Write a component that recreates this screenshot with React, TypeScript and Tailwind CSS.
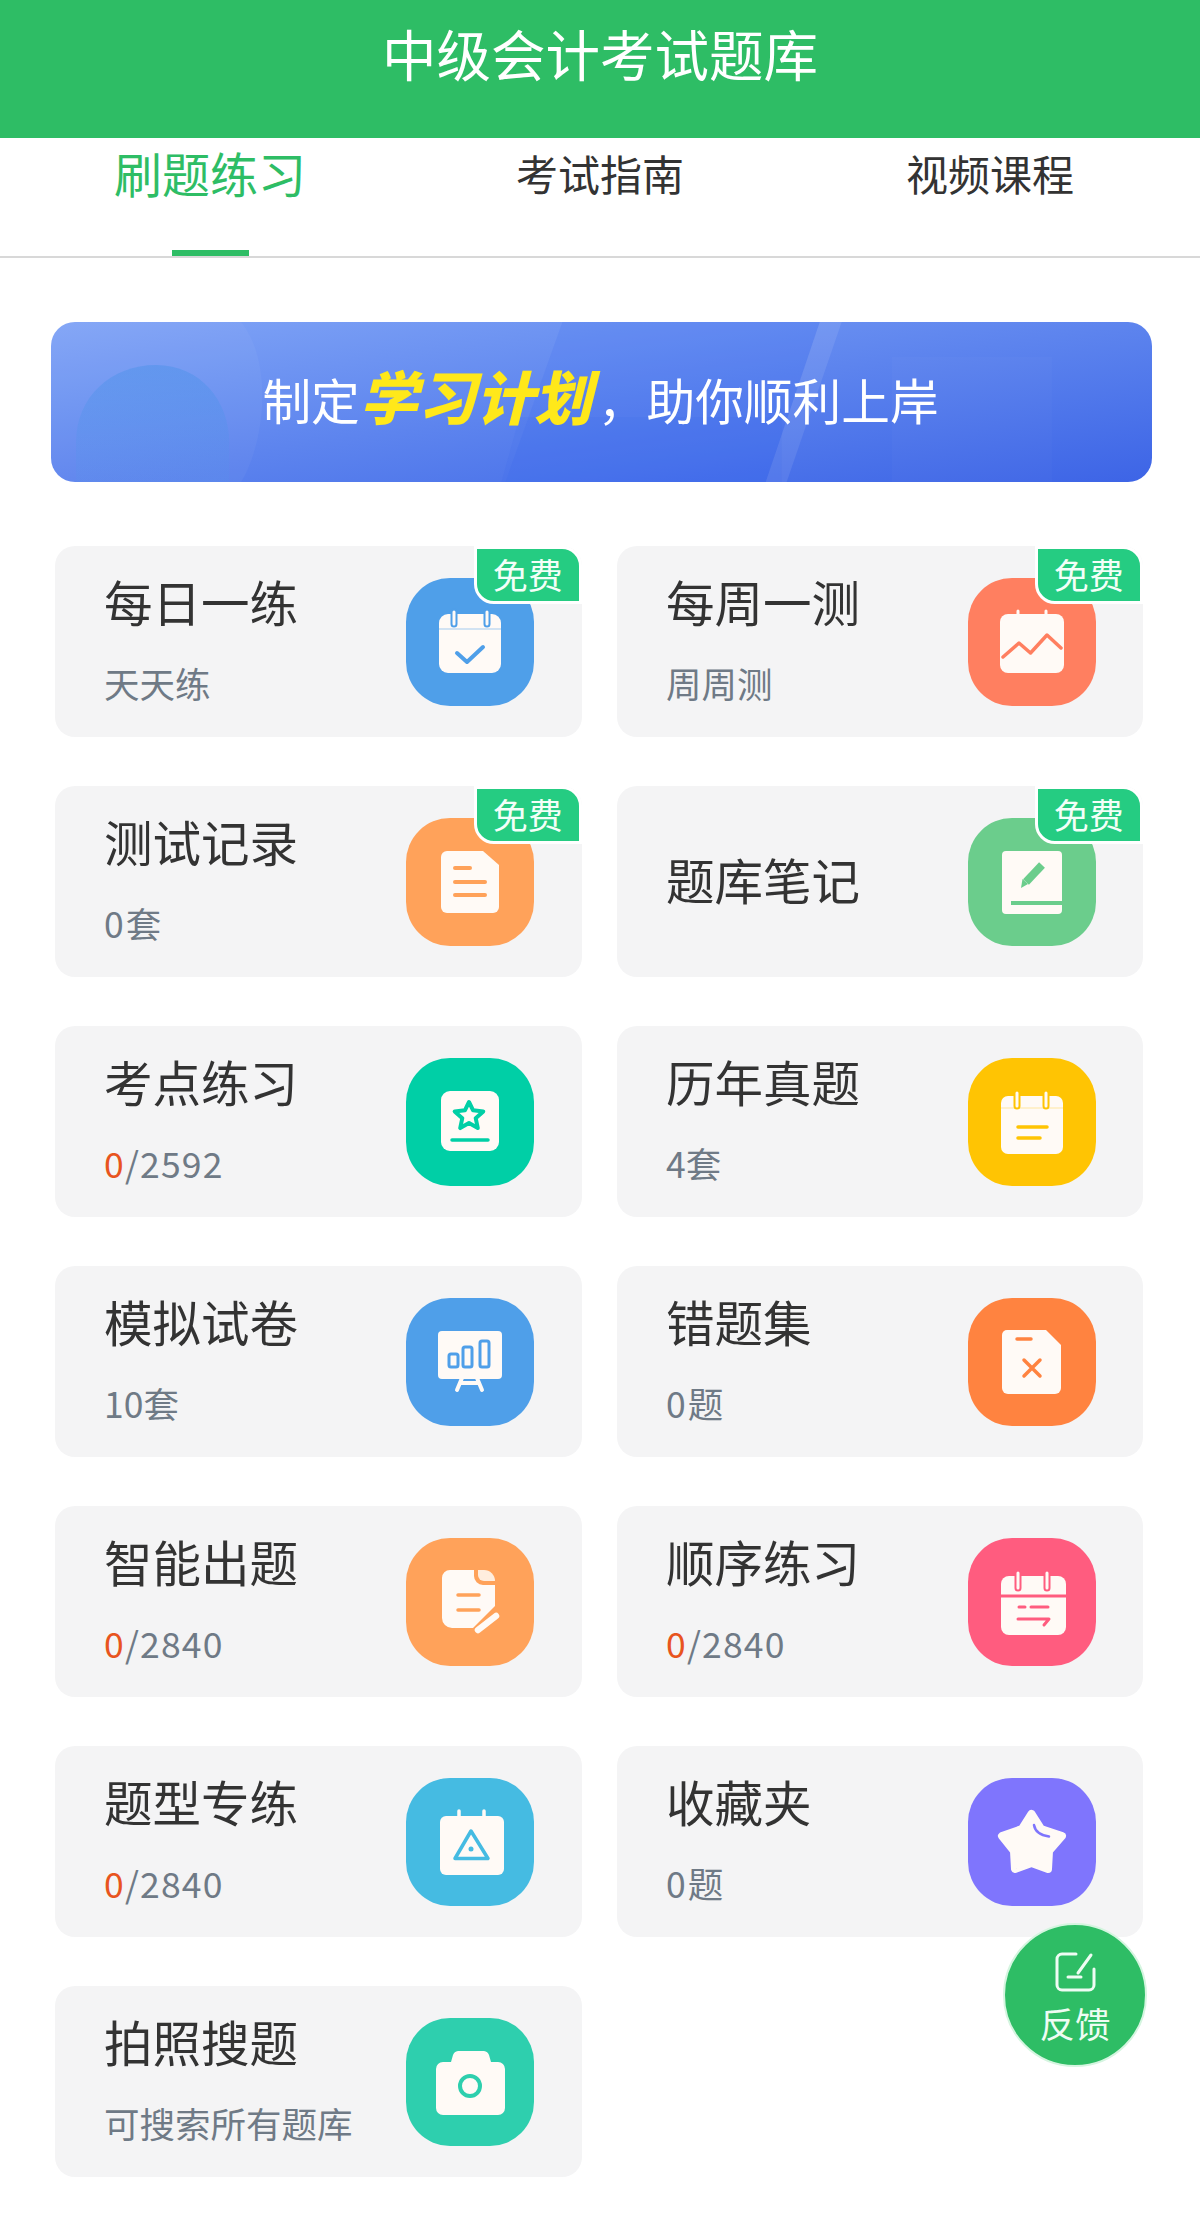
import type { ReactNode } from 'react';

const INK = '#fffaf6';

type Item = {
  title: string;
  sub?: ReactNode;
  tile: string;
  free?: boolean;
  icon: ReactNode;
};

function Progress({ total }: { total: number }) {
  return (
    <span className="tracking-[1.200px]">
      <span className="text-[#e8541e]">0</span>/{total}
    </span>
  );
}

function Count({ label }: { label: string }) {
  return <span className="tracking-[2px]">{label}</span>;
}

function CalendarCheck({ c }: { c: string }) {
  return (
    <>
      <rect x="33" y="36" width="62" height="59" rx="9" fill={INK} />
      <path d="M33 51H95" stroke={c} strokeWidth="1" opacity=".5" />
      <path d="M48 34V46M81 34V46" stroke={c} strokeWidth="7" strokeLinecap="round" />
      <path d="M48 34V46M81 34V46" stroke={INK} strokeWidth="3" strokeLinecap="round" />
      <path d="M51 75L61 84L77 69" fill="none" stroke={c} strokeWidth="4" strokeLinecap="round" strokeLinejoin="round" />
    </>
  );
}

function CalendarChart({ c }: { c: string }) {
  return (
    <>
      <rect x="32" y="36" width="64" height="59" rx="8" fill={INK} />
      <path d="M50 33V38M78 33V38" stroke={INK} strokeWidth="3" strokeLinecap="round" />
      <path d="M35 79L51 65L62.500 75L79 57L93 70" fill="none" stroke={c} strokeWidth="3.500" strokeLinejoin="round" strokeLinecap="round" />
    </>
  );
}

function DocLines({ c }: { c: string }) {
  return (
    <>
      <path d="M41 33H77L93 47V89a6 6 0 0 1-6 6H41a6 6 0 0 1-6-6V39a6 6 0 0 1 6-6Z" fill={INK} />
      <path d="M49 50H64M49 64H79M49 77H79" stroke={c} strokeWidth="4" strokeLinecap="round" />
    </>
  );
}

function BookPen({ c }: { c: string }) {
  return (
    <>
      <rect x="34" y="33" width="60" height="63" rx="4" fill={INK} />
      <path d="M43 85H94" stroke={c} strokeWidth="4" />
      <path d="M58 64L74 47" stroke={c} strokeWidth="8" />
      <path d="M53 70L54.500 61L60 66Z" fill={c} />
    </>
  );
}

function StarCard({ c }: { c: string }) {
  return (
    <>
      <rect x="35" y="33" width="58" height="60" rx="9" fill={INK} />
      <path
        d="M63 44L67.100 52.300L77.300 53.400L69.700 60.200L71.800 70.100L63 65L54.200 70.100L56.300 60.200L48.700 53.400L58.900 52.300Z"
        fill={INK}
        stroke={c}
        strokeWidth="4"
        strokeLinejoin="round"
      />
      <path d="M46 82H82" stroke={c} strokeWidth="3.500" strokeLinecap="round" />
    </>
  );
}

function CalendarNote({ c }: { c: string }) {
  return (
    <>
      <rect x="33" y="38" width="62" height="58" rx="7" fill={INK} />
      <path d="M33 50H95" stroke={c} strokeWidth="1" opacity=".35" />
      <path d="M49 35V48M78 35V48" stroke={c} strokeWidth="7" strokeLinecap="round" />
      <path d="M49 35V48M78 35V48" stroke={INK} strokeWidth="3" strokeLinecap="round" />
      <path d="M50 69H79M50 80H72" stroke={c} strokeWidth="3.500" strokeLinecap="round" />
    </>
  );
}

function Board({ c }: { c: string }) {
  return (
    <>
      <path d="M56 80L51 92M71 80L76 92M54 85H73" stroke={INK} strokeWidth="4" strokeLinecap="round" fill="none" />
      <rect x="32" y="33" width="64" height="48" rx="4" fill={INK} />
      <rect x="43" y="56" width="9" height="13" rx="2" fill={INK} stroke={c} strokeWidth="3" />
      <rect x="57" y="49" width="9" height="20" rx="2" fill={INK} stroke={c} strokeWidth="3" />
      <rect x="74" y="43" width="9" height="26" rx="2" fill={INK} stroke={c} strokeWidth="3" />
    </>
  );
}

function DocCross({ c }: { c: string }) {
  return (
    <>
      <path d="M39 32H78L93 47V90a6 6 0 0 1-6 6H40a6 6 0 0 1-6-6V37a5 5 0 0 1 5-5Z" fill={INK} />
      <path d="M49 41H63" stroke={c} strokeWidth="3.500" strokeLinecap="round" />
      <path d="M56 62L72 78M72 62L56 78" stroke={c} strokeWidth="3.500" strokeLinecap="round" />
    </>
  );
}

function DocPen({ c }: { c: string }) {
  return (
    <>
      <path d="M44 32H68V38a9 9 0 0 0 9 9H89V68L67 90H46a10 10 0 0 1-10-10V40a8 8 0 0 1 8-8Z" fill={INK} />
      <path d="M72 32H78a11 11 0 0 1 11 11H78a6 6 0 0 1-6-6Z" fill={INK} opacity=".85" />
      <path d="M52 57H73M52 72H73" stroke={c} strokeWidth="3.500" strokeLinecap="round" />
      <path d="M72 92L90 78" stroke={INK} strokeWidth="6.500" strokeLinecap="round" />
    </>
  );
}

function CalendarTalk({ c }: { c: string }) {
  return (
    <>
      <rect x="33" y="38" width="65" height="59" rx="8" fill={INK} />
      <path d="M33 58H98" stroke={c} strokeWidth="3" />
      <path d="M50 35V50M79 35V50" stroke={c} strokeWidth="7" strokeLinecap="round" />
      <path d="M50 35V50M79 35V50" stroke={INK} strokeWidth="3" strokeLinecap="round" />
      <path d="M51 69H57M63 69H80M50 81H81L76 87" fill="none" stroke={c} strokeWidth="3" strokeLinecap="round" strokeLinejoin="round" />
    </>
  );
}

function CalendarTriangle({ c }: { c: string }) {
  return (
    <>
      <rect x="34" y="38" width="64" height="59" rx="6" fill={INK} />
      <path d="M53 33V39M78 33V39" stroke={INK} strokeWidth="3.500" strokeLinecap="round" />
      <path d="M65 53L82 80.500H49Z" fill="none" stroke={c} strokeWidth="3.500" strokeLinejoin="round" />
      <circle cx="65" cy="71" r="2.500" fill={c} />
    </>
  );
}

function StarFill({ c }: { c: string }) {
  return (
    <>
      <path
        d="M63.500 36L73 51L94 58L81 73L80 91L63.500 85L47 91L46 73L34 58L54 51Z"
        fill={INK}
        stroke={INK}
        strokeWidth="8"
        strokeLinejoin="round"
      />
      <path d="M66 47C67 53 71 57 81 58.500" fill="none" stroke={c} strokeWidth="2.500" strokeLinecap="round" />
    </>
  );
}

function Camera({ c }: { c: string }) {
  return (
    <>
      <path d="M52 33H78a6 6 0 0 1 5 4L85 44H92a7 7 0 0 1 7 7V90a7 7 0 0 1-7 7H37a7 7 0 0 1-7-7V51a7 7 0 0 1 7-7H45L47 37a6 6 0 0 1 5-4Z" fill={INK} />
      <circle cx="64" cy="68" r="10" fill="none" stroke={c} strokeWidth="4" />
    </>
  );
}

function Glyph({ children }: { children: ReactNode }) {
  return (
    <svg viewBox="0 0 128 128" className="h-full w-full">
      {children}
    </svg>
  );
}

const items: Item[] = [
  { title: '每日一练', sub: '天天练', tile: 'bg-[#4f9fe9]', free: true, icon: <CalendarCheck c="#4f9fe9" /> },
  { title: '每周一测', sub: '周周测', tile: 'bg-[#ff7f60]', free: true, icon: <CalendarChart c="#ff7f60" /> },
  { title: '测试记录', sub: <Count label="0套" />, tile: 'bg-[#ffa25a]', free: true, icon: <DocLines c="#ffa25a" /> },
  { title: '题库笔记', tile: 'bg-[#6bcd8c]', free: true, icon: <BookPen c="#6bcd8c" /> },
  { title: '考点练习', sub: <Progress total={2592} />, tile: 'bg-[#00cfa6]', icon: <StarCard c="#00cfa6" /> },
  { title: '历年真题', sub: '4套', tile: 'bg-[#ffc403]', icon: <CalendarNote c="#ffc403" /> },
  { title: '模拟试卷', sub: '10套', tile: 'bg-[#4f9fe9]', icon: <Board c="#4f9fe9" /> },
  { title: '错题集', sub: <Count label="0题" />, tile: 'bg-[#ff8340]', icon: <DocCross c="#ff8340" /> },
  { title: '智能出题', sub: <Progress total={2840} />, tile: 'bg-[#ffa25a]', icon: <DocPen c="#ffa25a" /> },
  { title: '顺序练习', sub: <Progress total={2840} />, tile: 'bg-[#ff5c7f]', icon: <CalendarTalk c="#ff5c7f" /> },
  { title: '题型专练', sub: <Progress total={2840} />, tile: 'bg-[#45bbe2]', icon: <CalendarTriangle c="#45bbe2" /> },
  { title: '收藏夹', sub: <Count label="0题" />, tile: 'bg-[#7f75fd]', icon: <StarFill c="#7f75fd" /> },
  { title: '拍照搜题', sub: '可搜索所有题库', tile: 'bg-[#2ecfae]', icon: <Camera c="#2ecfae" /> },
];

function Card({ item }: { item: Item }) {
  return (
    <div className="relative flex h-[191px] items-center justify-between rounded-[20px] bg-[#f4f4f5] pl-[49px] odd:pr-[48px] even:pr-[47px]">
      <div className="flex flex-col gap-[40px] pb-[5px]">
        <h3 className="text-[48.500px] leading-[48px] font-normal text-[#333333]">{item.title}</h3>
        {item.sub && <p className="text-[35.500px] leading-[36px] text-[#6f7a86]">{item.sub}</p>}
      </div>
      <div className={`h-[128px] w-[128px] rounded-[44px] ${item.tile}`}>
        <Glyph>{item.icon}</Glyph>
      </div>
      {item.free && (
        <span className="absolute top-0 right-0 flex h-[58px] w-[108.500px] items-center justify-center rounded-tr-[20px] rounded-bl-[20px] border-[3px] border-white bg-[#25cc82] pb-[3px] text-[35px] leading-none text-[#f2fff8]">
          免费
        </span>
      )}
    </div>
  );
}

function BannerArt() {
  return (
    <svg viewBox="0 0 1100 160" preserveAspectRatio="none" className="absolute inset-0 h-full w-full">
      <defs>
        <linearGradient id="arch" x1="0" y1="0" x2="0" y2="1">
          <stop offset="0" stopColor="#3f8ee6" stopOpacity=".38" />
          <stop offset="1" stopColor="#4f9bea" stopOpacity=".12" />
        </linearGradient>
      </defs>
      <path d="M0 0H190C222 40 214 120 190 160H0Z" fill="#ffffff" opacity=".04" />
      <path d="M25 160V120C25 75 60 43 105 43C150 43 178 80 178 120V160Z" fill="url(#arch)" />
      <path d="M511 0H768L714 160H454Z" fill="#2f62ee" opacity=".14" />
      <path d="M768 0H790L735 160H714Z" fill="#ffffff" opacity=".09" />
      <path d="M468 95H730V160H450Z" fill="#2f62ee" opacity=".1" />
      <path d="M840 35H1000V160H840Z" fill="#ffffff" opacity=".02" />
    </svg>
  );
}

export default function App() {
  return (
    <div className="relative min-h-[2234px] w-[1200px] bg-white font-['Noto_Sans_CJK_SC','Noto_Sans',sans-serif]">
      <header className="h-[138px] bg-[#2ebd65] pt-[25px] text-center text-[54.500px] leading-[55px] text-white">
        中级会计考试题库
      </header>

      <nav className="grid h-[120px] grid-cols-3 border-b-2 border-[#d8d8d8] px-[15px]">
        <div className="flex flex-col items-center justify-between pt-[10px]">
          <span className="text-[48px] leading-[48px] text-[#2ebd65]">刷题练习</span>
          <span className="h-[6px] w-[77px] bg-[#2ebd65]" />
        </div>
        <div className="pt-[14px] text-center text-[42px] leading-[42px] text-[#333333]">考试指南</div>
        <div className="pt-[14px] text-center text-[42px] leading-[42px] text-[#333333]">视频课程</div>
      </nav>

      <main className="pt-[64px]">
        <div className="relative mr-[48px] ml-[51px] flex h-[160px] items-center justify-center overflow-hidden rounded-[24px] bg-linear-to-br from-[#80a4f6] via-[#5d84ee] to-[#3d64e6] pr-[2px] pb-[14px]">
          <BannerArt />
          <p className="relative text-[48.700px] leading-none text-white">
            制定
            <span className="mr-[6px] text-[58px] font-black text-[#ffe81a] italic">学习计划</span>
            ，助你顺利上岸
          </p>
        </div>

        <div className="mt-[64px] grid grid-cols-[527px_526px] gap-x-[35px] gap-y-[49px] pr-[57px] pb-[57px] pl-[55px]">
          {items.map((item) => (
            <Card key={item.title} item={item} />
          ))}
        </div>
      </main>

      {/* Feedback button floats over the list */}
      <button
        type="button"
        className="absolute top-[1923px] right-[53px] flex h-[144px] w-[144px] flex-col items-center rounded-full border-2 border-[#d5f5e0] bg-[#2ebd65] pt-[27px] text-[#eefcf3]"
      >
        <svg viewBox="0 0 41 40" className="h-[40px] w-[41px]" fill="none" stroke="currentColor" strokeWidth="3" strokeLinecap="round">
          <path d="M21 2H7a5 5 0 0 0-5 5v26a5 5 0 0 0 5 5h27a5 5 0 0 0 5-5V17" />
          <path d="M23 21L36 3" />
          <path d="M13 25H26" />
        </svg>
        <span className="mt-[13px] text-[35.500px] leading-[35px]">反馈</span>
      </button>
    </div>
  );
}
